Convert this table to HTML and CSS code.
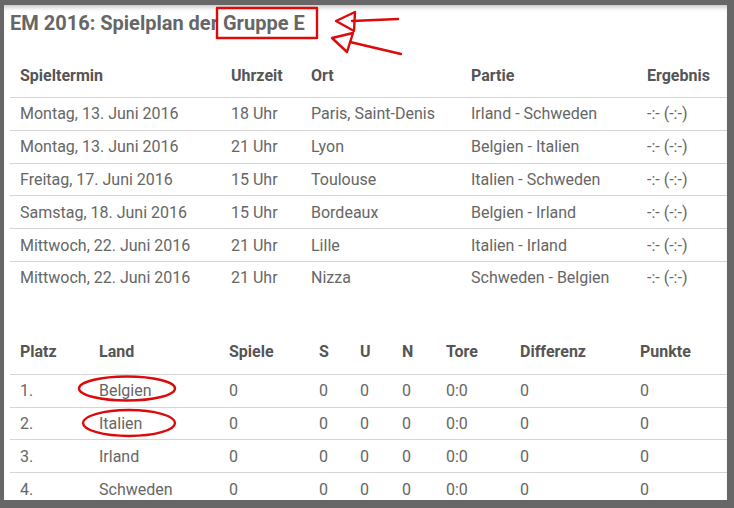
FILE: index.html
```html
<!DOCTYPE html>
<html lang="de">
<head>
    <meta charset="UTF-8">
    <title>EM 2016: Spielplan der Gruppe E</title>
    <link rel="stylesheet" href="styles.css">
</head>
<body>
    <div class="page">
        <h1>EM 2016: Spielplan der Gruppe E</h1>

        <table class="plan">
            <colgroup>
                <col class="c-termin"><col class="c-zeit"><col class="c-ort"><col class="c-partie"><col class="c-ergebnis">
            </colgroup>
            <thead>
                <tr><th>Spieltermin</th><th>Uhrzeit</th><th>Ort</th><th>Partie</th><th>Ergebnis</th></tr>
            </thead>
            <tbody>
                <tr><td>Montag, 13. Juni 2016</td><td>18 Uhr</td><td>Paris, Saint-Denis</td><td>Irland - Schweden</td><td>-:- (-:-)</td></tr>
                <tr><td>Montag, 13. Juni 2016</td><td>21 Uhr</td><td>Lyon</td><td>Belgien - Italien</td><td>-:- (-:-)</td></tr>
                <tr><td>Freitag, 17. Juni 2016</td><td>15 Uhr</td><td>Toulouse</td><td>Italien - Schweden</td><td>-:- (-:-)</td></tr>
                <tr><td>Samstag, 18. Juni 2016</td><td>15 Uhr</td><td>Bordeaux</td><td>Belgien - Irland</td><td>-:- (-:-)</td></tr>
                <tr><td>Mittwoch, 22. Juni 2016</td><td>21 Uhr</td><td>Lille</td><td>Italien - Irland</td><td>-:- (-:-)</td></tr>
                <tr><td>Mittwoch, 22. Juni 2016</td><td>21 Uhr</td><td>Nizza</td><td>Schweden - Belgien</td><td>-:- (-:-)</td></tr>
            </tbody>
        </table>

        <table class="standings">
            <colgroup>
                <col class="c-platz"><col class="c-land"><col class="c-spiele"><col class="c-s"><col class="c-u"><col class="c-n"><col class="c-tore"><col class="c-diff"><col class="c-punkte">
            </colgroup>
            <thead>
                <tr><th>Platz</th><th>Land</th><th>Spiele</th><th>S</th><th>U</th><th>N</th><th>Tore</th><th>Differenz</th><th>Punkte</th></tr>
            </thead>
            <tbody>
                <tr><td>1.</td><td>Belgien</td><td>0</td><td>0</td><td>0</td><td>0</td><td>0:0</td><td>0</td><td>0</td></tr>
                <tr><td>2.</td><td>Italien</td><td>0</td><td>0</td><td>0</td><td>0</td><td>0:0</td><td>0</td><td>0</td></tr>
                <tr><td>3.</td><td>Irland</td><td>0</td><td>0</td><td>0</td><td>0</td><td>0:0</td><td>0</td><td>0</td></tr>
                <tr><td>4.</td><td>Schweden</td><td>0</td><td>0</td><td>0</td><td>0</td><td>0:0</td><td>0</td><td>0</td></tr>
            </tbody>
        </table>
    </div>

    <!-- hand-drawn red marks on top of the screenshot -->
    <svg class="marks" width="734" height="508" viewBox="0 0 734 508">
        <g fill="none" stroke="#dc0a0a" stroke-width="2.4" stroke-linejoin="round" stroke-linecap="round">
            <rect x="217" y="8" width="100" height="30"/>
            <path d="M398 19 L352 21"/>
            <path d="M336 21 L355 12 L354 31 Z"/>
            <path d="M401 54 L350 42"/>
            <path d="M332 38 L353 33 L347 52 Z"/>
            <ellipse cx="127" cy="388.5" rx="48" ry="12"/>
            <ellipse cx="129" cy="423" rx="46" ry="13"/>
        </g>
    </svg>
</body>
</html>
```

FILE: styles.css
```css
body {
    margin: 0;
    background-color: #676767;
    font-family: Roboto, "Liberation Sans", sans-serif;
    color: #666;
    width: 734px;
    height: 508px;
    overflow: hidden;
}
.page {
    margin: 5px 7px 0 4px;
    height: 495px;
    overflow: hidden;
    background-color: #fff;
    box-shadow: inset 0 5px 5px -3px rgba(0,0,0,0.25);
}
h1 {
    margin: 0;
    padding: 7px 0 0 6px;
    height: 41px;
    font-size: 20px;
    line-height: 22px;
    font-weight: bold;
    color: #666;
}
table {
    width: 723px;
    margin-left: 6px;
    border-collapse: collapse;
    table-layout: fixed;
}
th, td {
    text-align: left;
    padding: 0 0 0 10px;
    white-space: nowrap;
}
th {
    height: 44px;
    font-size: 16px;
    font-weight: bold;
    color: #555;
    border-bottom: 1px solid #d4d4d4;
}
td {
    height: 31.8px;
    font-size: 16px;
    border-bottom: 1px solid #d4d4d4;
}
tbody tr:last-child td {
    border-bottom: none;
}
.standings {
    margin-top: 36px;
}
.c-termin { width: 211px; }
.c-zeit { width: 80px; }
.c-ort { width: 160px; }
.c-partie { width: 176px; }
.c-ergebnis { width: 96px; }
.c-platz { width: 79px; }
.c-land { width: 130px; }
.c-spiele { width: 90px; }
.c-s { width: 41px; }
.c-u { width: 42px; }
.c-n { width: 44px; }
.c-tore { width: 74px; }
.c-diff { width: 120px; }
.c-punkte { width: 103px; }
.marks {
    position: absolute;
    left: 0;
    top: 0;
}
```
